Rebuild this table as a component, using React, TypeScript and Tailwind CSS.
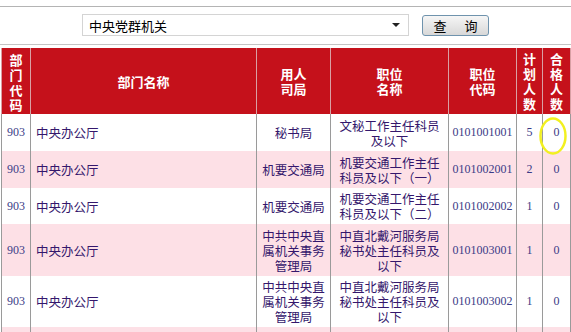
import React from 'react';

type Row = {
  dept: string;
  name: string;
  bureau: string[];
  post: string[];
  code: string;
  plan: number;
  pass: number;
  h: string;
  pink: boolean;
};

const ROWS: Row[] = [
  { dept: '903', name: '中央办公厅', bureau: ['秘书局'], post: ['文秘工作主任科员', '及以下'], code: '0101001001', plan: 5, pass: 0, h: 'h-[37px]', pink: false },
  { dept: '903', name: '中央办公厅', bureau: ['机要交通局'], post: ['机要交通工作主任', '科员及以下（一）'], code: '0101002001', plan: 2, pass: 0, h: 'h-[37px]', pink: true },
  { dept: '903', name: '中央办公厅', bureau: ['机要交通局'], post: ['机要交通工作主任', '科员及以下（二）'], code: '0101002002', plan: 1, pass: 0, h: 'h-[36px]', pink: false },
  { dept: '903', name: '中央办公厅', bureau: ['中共中央直', '属机关事务', '管理局'], post: ['中直北戴河服务局', '秘书处主任科员及', '以下'], code: '0101003001', plan: 1, pass: 0, h: 'h-[52px]', pink: true },
  { dept: '903', name: '中央办公厅', bureau: ['中共中央直', '属机关事务', '管理局'], post: ['中直北戴河服务局', '秘书处主任科员及', '以下'], code: '0101003002', plan: 1, pass: 0, h: 'h-[51px]', pink: false },
  { dept: '903', name: '中央办公厅', bureau: ['中共中央直', '属机关事务', '管理局'], post: ['中直北戴河服务局', '秘书处主任科员及', '以下'], code: '0101004001', plan: 1, pass: 0, h: 'h-[51px]', pink: true },
];

const cjk = "font-['Noto_Sans_CJK_SC',sans-serif]";
const serif = "font-['Liberation_Serif','Noto_Sans_CJK_SC',serif]";

const Lines: React.FC<{ lines: string[] }> = ({ lines }) => (
  <>
    {lines.map((l, i) => (
      <div key={i}>{l}</div>
    ))}
  </>
);

const App: React.FC = () => {
  return (
    <div className={`relative h-[332px] w-[571px] overflow-hidden bg-white ${cjk}`}>
      <div className="mt-[6px] border-t border-[#b4b4b4]" />
      <div className="flex items-center pl-[82px] pt-[7px]">
        <div className="flex h-[22px] w-[327px] items-center justify-between border border-[#d4d4d4] bg-white pl-[6px] pr-[8px] text-[13px] leading-none text-black">
          <span>中央党群机关</span>
          <span className="h-0 w-0 border-x-[4px] border-t-[4px] border-x-transparent border-t-[#222]" />
        </div>
        <button className="ml-[13px] flex h-[21px] w-[67px] items-center justify-center gap-[18px] rounded-[3px] border border-[#6f93ad] bg-gradient-to-b from-[#f6f6f6] to-[#d8d8d8] text-[13px] leading-none text-black">
          <span>查</span>
          <span>询</span>
        </button>
      </div>
      <div className="mt-[8px] border-t border-[#c4c4c4]" />

      <table className="ml-px mt-[3px] w-[569px] table-fixed border-collapse">
        <colgroup>
          <col className="w-[29px]" />
          <col className="w-[226px]" />
          <col className="w-[74px]" />
          <col className="w-[118px]" />
          <col className="w-[68px]" />
          <col className="w-[26px]" />
          <col className="w-[28px]" />
        </colgroup>
        <thead>
          <tr className="h-[66px] bg-[#c5111b] text-center text-[13px] font-bold leading-[15px] text-white">
            <th className="border-x border-[#d9a0a4] px-0 pt-[1px]"><Lines lines={['部', '门', '代', '码']} /></th>
            <th className="border-x border-[#d9a0a4]">部门名称</th>
            <th className="border-x border-[#d9a0a4]"><Lines lines={['用人', '司局']} /></th>
            <th className="border-x border-[#d9a0a4]"><Lines lines={['职位', '名称']} /></th>
            <th className="border-x border-[#d9a0a4]"><Lines lines={['职位', '代码']} /></th>
            <th className="border-x border-[#d9a0a4] px-0"><Lines lines={['计', '划', '人', '数']} /></th>
            <th className="border-x border-[#d9a0a4] px-0"><Lines lines={['合', '格', '人', '数']} /></th>
          </tr>
        </thead>
        <tbody>
          {ROWS.map((r, i) => (
            <tr key={i} className={`${r.h} ${r.pink ? 'bg-[#fde0e6]' : 'bg-white'} text-[12.5px] leading-[15px] text-[#34176c]`}>
              <td className={`border-x border-[#9a9a9a] text-center text-[12px] text-[#3b3b86] ${serif}`}>{r.dept}</td>
              <td className="border-x border-[#9a9a9a] pl-[5px] text-left">{r.name}</td>
              <td className="border-x border-[#9a9a9a] text-center"><Lines lines={r.bureau} /></td>
              <td className="border-x border-[#9a9a9a] text-center"><Lines lines={r.post} /></td>
              <td className={`border-x border-[#9a9a9a] text-center text-[12px] text-[#3b3b86] ${serif}`}>{r.code}</td>
              <td className={`border-x border-[#9a9a9a] text-center text-[12px] text-[#3b3b86] ${serif}`}>{r.plan}</td>
              <td className={`border-x border-[#9a9a9a] text-center text-[12px] text-[#3b3b86] ${serif}`}>{r.pass}</td>
            </tr>
          ))}
        </tbody>
      </table>

      <svg className="absolute left-[538px] top-[116px]" width="30" height="40" viewBox="0 0 30 40">
        <ellipse cx="15" cy="20" rx="12.5" ry="17.5" fill="none" stroke="#f2f020" strokeWidth="2.5" />
      </svg>
    </div>
  );
};

export default App;
